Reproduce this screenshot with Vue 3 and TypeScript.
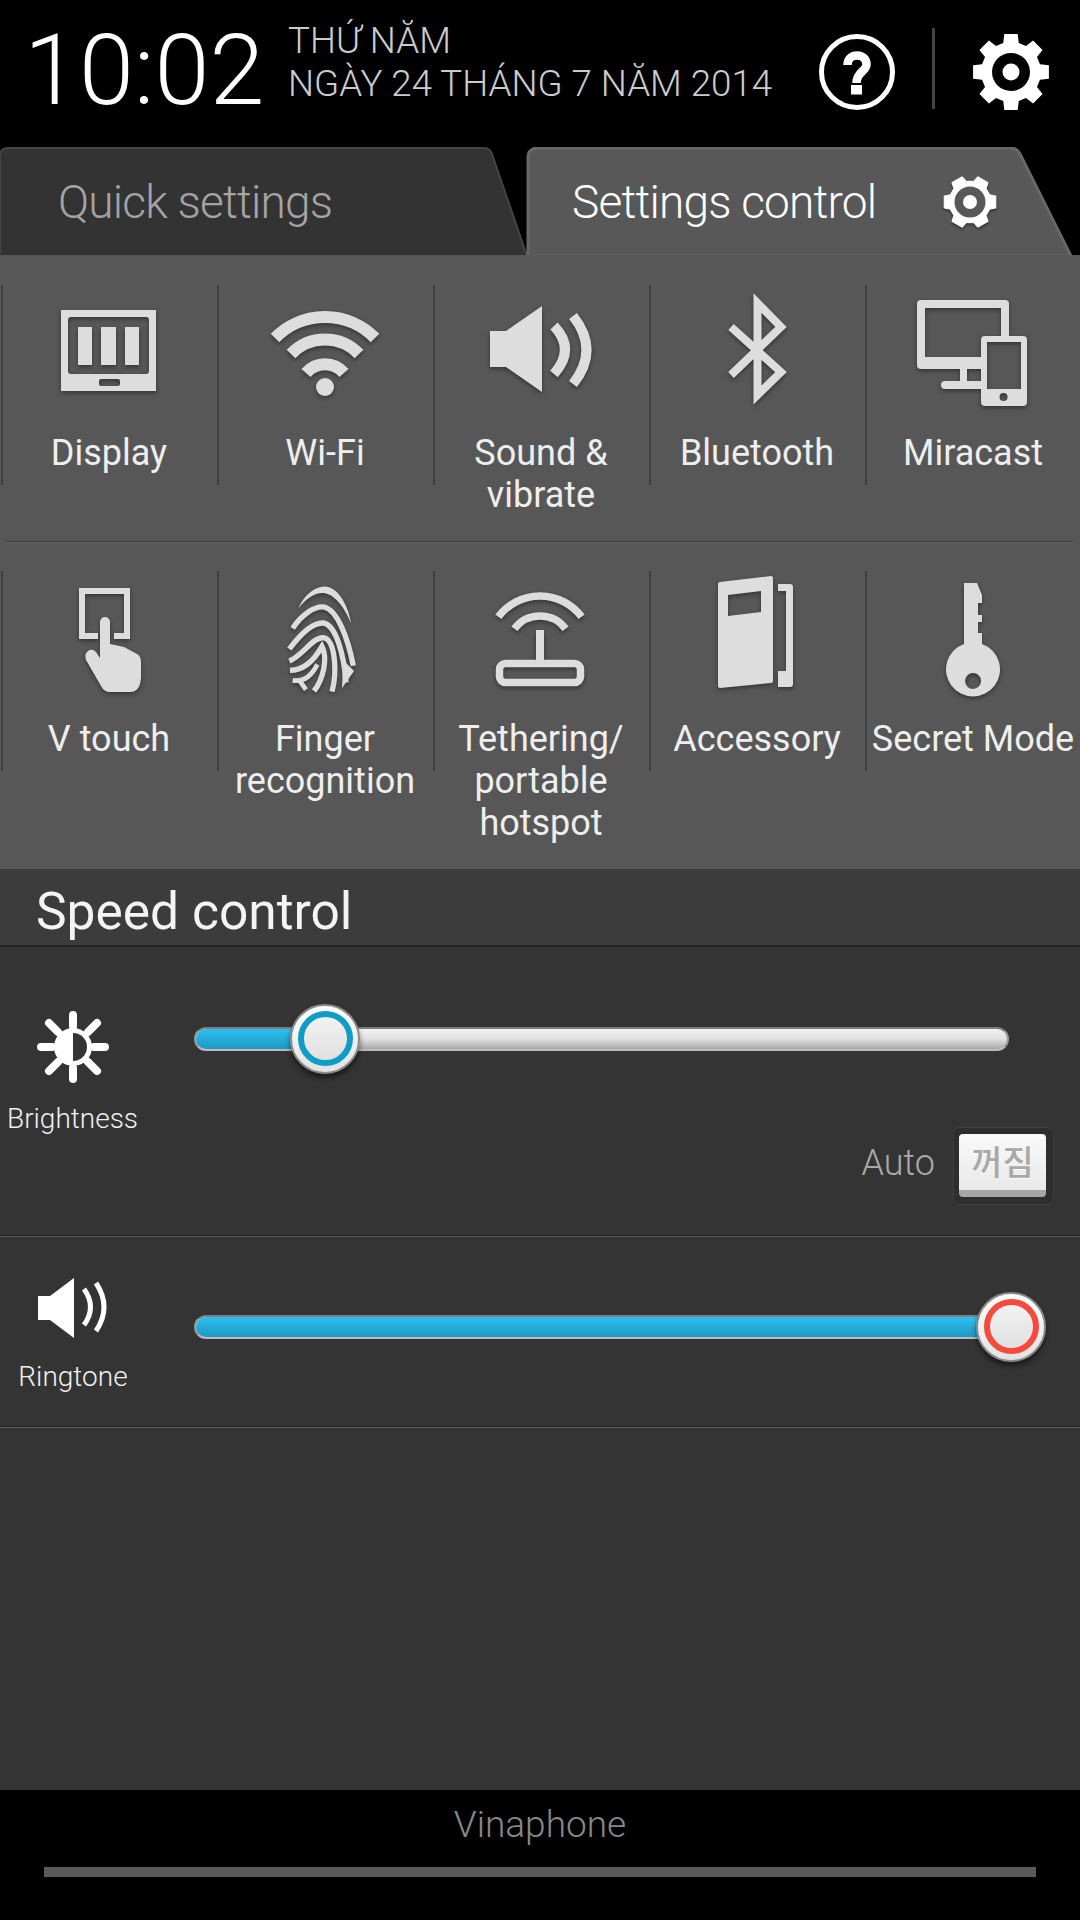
<script setup lang="ts">
function gear(cx: number, cy: number, n: number, rTip: number, rBody: number, tipHalf: number, baseHalf: number, start = 0): string {
  const pts: string[] = []
  const p = (deg: number, r: number) => {
    const a = (deg * Math.PI) / 180
    return `${(cx + r * Math.cos(a)).toFixed(2)} ${(cy + r * Math.sin(a)).toFixed(2)}`
  }
  for (let i = 0; i < n; i++) {
    const a = start + (360 / n) * i
    pts.push(p(a - baseHalf, rBody), p(a - tipHalf, rTip), p(a + tipHalf, rTip), p(a + baseHalf, rBody))
  }
  return 'M' + pts.join('L') + 'Z'
}
const bigGear = gear(1011, 72, 8, 38.5, 30, 10, 15)
const smallGear = gear(970, 202, 6, 26.5, 21, 13, 20)

const trackInnerLeft = 196
const trackInnerWidth = 811
const brightnessPct = ((325 - trackInnerLeft) / trackInnerWidth) * 100
const ringtonePct = ((1011 - trackInnerLeft) / trackInnerWidth) * 100
</script>

<template>
  <div class="screen">
    <header class="status">
      <div class="time">10:02</div>
      <div class="date">
        <div>THỨ NĂM</div>
        <div>NGÀY 24 THÁNG 7 NĂM 2014</div>
      </div>
      <svg class="help" viewBox="817 32 80 80">
        <circle cx="857" cy="72" r="35.5" fill="none" stroke="#fff" stroke-width="5" />
        <path d="M847.5 65C847.5 58.500 852 55.500 857 55.500C863 55.500 866.500 59.500 866.500 64.500C866.500 71.500 856.500 71.500 856.500 83" fill="none" stroke="#fff" stroke-width="8.500" />
        <rect x="851" y="85" width="11" height="9.500" fill="#fff" />
      </svg>
      <div class="vline"></div>
      <svg class="cog" viewBox="971 32 80 80">
        <path :d="bigGear" fill="#fff" />
        <circle cx="1011" cy="72" r="19" fill="#000" />
        <circle cx="1011" cy="72" r="8.500" fill="#fff" />
      </svg>
    </header>

    <div class="tabs">
      <svg class="tab-shapes" viewBox="0 147 1080 108">
        <path d="M0 256V156Q0 148 8 148H484Q490 148 492 154L527 256Z" fill="#333" stroke="#444" stroke-width="2" />
        <path d="M528 256V158Q528 148 538 148H1010Q1017 148 1020 154L1071 256Z" fill="#585858" stroke="#686868" stroke-width="3" />
      </svg>
      <div class="tab tab-off">Quick settings</div>
      <div class="tab tab-on">
        <span>Settings control</span>
        <svg class="tab-gear" viewBox="940 172 60 60">
          <path :d="smallGear" fill="#fff" stroke="#fff" stroke-width="1" stroke-linejoin="round" />
          <circle cx="970" cy="202" r="15.500" fill="#585858" />
          <circle cx="970" cy="202" r="7" fill="#fff" />
        </svg>
      </div>
    </div>

    <section class="panel">
      <div class="row row-a">
        <div class="cell">
          <svg class="ico" viewBox="1 285 216 147">
            <path fill-rule="evenodd" d="M61 310H156V391H61ZM71 317Q68 317 68 320V371Q68 374 71 374H146Q149 374 149 371V320Q149 317 146 317ZM101 379Q99 379 99 381V384Q99 386 101 386H118Q120 386 120 384V381Q120 379 118 379Z" fill="#ddd" />
            <path d="M78 327H92V365H78ZM101 327H116V365H101ZM125 327H139V365H125Z" fill="#ddd" />
          </svg>
          <div class="label">Display</div>
        </div>
        <div class="cell">
          <svg class="ico" viewBox="217 285 216 147">
            <g fill="none" stroke="#ddd" stroke-width="12">
              <path d="M275 338A70 70 0 0 1 375 338" />
              <path d="M291 354A47 47 0 0 1 359 354" />
              <path d="M306 373A25 25 0 0 1 344 373" />
            </g>
            <circle cx="325" cy="387" r="9" fill="#ddd" />
          </svg>
          <div class="label">Wi-Fi</div>
        </div>
        <div class="cell">
          <svg class="ico" viewBox="433 285 216 147">
            <path d="M490 331H506L542 306V392L506 367H490Z" fill="#ddd" />
            <g fill="none" stroke="#ddd" stroke-width="10">
              <path d="M554 326Q576 349 554 374" />
              <path d="M573 316Q600 350 573 384" />
            </g>
          </svg>
          <div class="label">Sound &amp;<br />vibrate</div>
        </div>
        <div class="cell">
          <svg class="ico" viewBox="649 285 216 147">
            <path d="M731 327L781 372L757.500 395V303L781 327L731 375" fill="none" stroke="#ddd" stroke-width="8" stroke-miterlimit="6" />
          </svg>
          <div class="label">Bluetooth</div>
        </div>
        <div class="cell">
          <svg class="ico" viewBox="865 285 216 147">
            <path fill-rule="evenodd" d="M921 300H1005Q1009 300 1009 304V336H1001V308H925V357H981V369H967V381H981V389H945Q941 389 941 385Q941 381 945 381H960V369H921Q917 369 917 365V304Q917 300 921 300Z" fill="#ddd" />
            <path fill-rule="evenodd" d="M985 336H1023Q1027 336 1027 340V402Q1027 406 1023 406H985Q981 406 981 402V340Q981 336 985 336ZM987 342V389H1021V342ZM1003.500 393A4 4 0 1 0 1003.600 401A4 4 0 1 0 1003.500 393Z" fill="#ddd" />
          </svg>
          <div class="label">Miracast</div>
        </div>
      </div>

      <div class="hr"></div>

      <div class="row row-b">
        <div class="cell">
          <svg class="ico" viewBox="1 571 216 147">
            <path d="M98 636H82V591H127V636H114" fill="none" stroke="#ddd" stroke-width="6" />
            <path d="M100 622A5 5 0 0 1 110 622V644L124 647L137 654Q141 656 141 662V678Q140 692 130 692H110Q104 692 101 686L86 660Q84 654 88 651Q92 648 96 652L100 658Z" fill="#ddd" />
          </svg>
          <div class="label">V touch</div>
        </div>
        <div class="cell">
          <svg class="ico" viewBox="217 571 216 147">
            <g transform="translate(270 575) scale(.33333)" fill="none" stroke="#ddd" stroke-width="16">
              <path d="M85 100C105 55 140 33 170 35C205 40 235 90 243 145C225 100 195 60 165 55C135 50 105 75 85 100Z" fill="#ddd" stroke="none" />
              <path d="M68 160C95 118 135 92 162 96C202 104 234 190 250 272" />
              <path d="M58 222C88 182 128 142 160 144C198 150 222 240 228 322" />
              <path d="M58 258C98 242 128 186 160 188C196 194 202 290 186 350" />
              <path d="M60 286C110 286 138 246 156 214C174 250 160 312 132 348" />
              <path d="M68 316C104 322 128 296 142 268" stroke-width="14" />
              <path d="M88 316L108 344" stroke-width="14" />
              <path d="M220 256L252 288L216 340Z" fill="#ddd" stroke="none" />
            </g>
          </svg>
          <div class="label">Finger<br />recognition</div>
        </div>
        <div class="cell">
          <svg class="ico" viewBox="433 571 216 147">
            <g fill="none" stroke="#ddd" stroke-width="7.500">
              <path d="M498.400 616.800A52 52 0 0 1 581.600 616.800" />
              <path d="M514.400 628.800A32 32 0 0 1 565.600 628.800" />
              <rect x="499.500" y="663.500" width="81" height="19" rx="6" />
            </g>
            <rect x="536" y="630" width="8" height="32" fill="#ddd" />
          </svg>
          <div class="label">Tethering/<br />portable<br />hotspot</div>
        </div>
        <div class="cell">
          <svg class="ico" viewBox="649 571 216 147">
            <path fill-rule="evenodd" d="M720 582L771 576Q773 576 773 578V681Q773 683 771 683L720 688Q718 688 718 686V584Q718 582 720 582ZM728 595V616L761 612V591Z" fill="#ddd" />
            <path d="M778 584H790Q793 584 793 587V684Q793 687 790 687H778V671H786V591H778Z" fill="#ddd" />
          </svg>
          <div class="label">Accessory</div>
        </div>
        <div class="cell">
          <svg class="ico" viewBox="865 571 216 147">
            <path fill-rule="evenodd" d="M964 583H977L982 595V603H978V615H982V622H978V633H982V644A27 27 0 1 1 964 644ZM973 673A8 8 0 1 0 973.100 689A8 8 0 1 0 973 673Z" fill="#ddd" />
          </svg>
          <div class="label">Secret Mode</div>
        </div>
      </div>
    </section>

    <div class="speed-head">Speed control</div>

    <section class="speed">
      <div class="srow srow-a">
        <div class="side">
          <svg class="side-ico" viewBox="32 1007 80 80">
            <g stroke="#fff" stroke-width="8" stroke-linecap="round">
              <path d="M72 1015V1026M72 1068V1079M40 1047H51M93 1047H104M48 1023L57 1032M87 1062L96 1071M48 1071L57 1062M87 1032L96 1023" />
            </g>
            <circle cx="72" cy="1047" r="19" fill="#fff" />
            <path d="M72 1033A14 14 0 0 1 72 1061Z" fill="#343434" />
          </svg>
          <div class="side-label">Brightness</div>
        </div>
        <div class="slider-col">
          <div class="track">
            <div class="fill" :style="{ width: brightnessPct + '%' }"></div>
            <div class="thumb blue" :style="{ left: brightnessPct + '%' }"><i></i></div>
          </div>
          <div class="auto">
            <span class="auto-label">Auto</span>
            <div class="toggle"><div class="toggle-btn">꺼짐</div></div>
          </div>
        </div>
      </div>
      <div class="srow srow-b">
        <div class="side side-ring">
          <svg class="side-ico ring" viewBox="33 1273 80 70">
            <path d="M38 1296H50L74 1278V1338L50 1320H38Z" fill="#fff" />
            <g fill="none" stroke="#fff" stroke-width="5">
              <path d="M84 1289Q97 1307 84 1325" />
              <path d="M96 1283Q112 1307 96 1331" />
            </g>
          </svg>
          <div class="side-label">Ringtone</div>
        </div>
        <div class="slider-col">
          <div class="track">
            <div class="fill full"></div>
            <div class="thumb red" :style="{ left: ringtonePct + '%' }"><i></i></div>
          </div>
        </div>
      </div>
    </section>

    <footer class="foot">
      <div class="carrier">Vinaphone</div>
      <div class="foot-bar"></div>
    </footer>
  </div>
</template>

<style scoped>
.screen {
  width: 1080px;
  height: 1920px;
  background: #000;
  overflow: hidden;
  display: flex;
  flex-direction: column;
  font-family: Roboto, "Noto Sans CJK KR", sans-serif;
  color: #f2f2f2;
}
.status {
  height: 147px;
  display: flex;
  align-items: flex-start;
  padding-left: 24px;
  box-sizing: border-box;
  flex: none;
}
.time {
  font-size: 99px;
  line-height: 110px;
  font-weight: 300;
  color: #fff;
  margin-top: 15px;
  width: 264px;
}
.date {
  font-size: 36.7px;
  line-height: 43px;
  font-weight: 300;
  color: #ccc;
  margin-top: 19px;
}
.help {
  width: 80px;
  height: 80px;
  margin-top: 32px;
  margin-left: auto;
}
.vline {
  width: 3px;
  height: 81px;
  margin: 28px 0 0 35px;
  background: #444;
}
.cog {
  width: 80px;
  height: 80px;
  margin: 32px 29px 0 36px;
}
.tabs {
  height: 108px;
  flex: none;
  position: relative;
  display: flex;
}
.tab-shapes {
  position: absolute;
  left: 0;
  top: 0;
  width: 1080px;
  height: 108px;
}
.tab {
  position: relative;
  font-size: 46px;
  line-height: 52px;
  font-weight: 300;
  letter-spacing: -0.8px;
  display: flex;
  align-items: center;
  height: 108px;
  padding-top: 2px;
  box-sizing: border-box;
}
.tab-off {
  width: 527px;
  padding-left: 58px;
  color: #a4a4a4;
}
.tab-on {
  width: 553px;
  padding-left: 45px;
  color: #fff;
}
.tab-gear {
  width: 60px;
  height: 60px;
  position: absolute;
  left: 413px;
  top: 25px;
  filter: drop-shadow(0 2px 1px rgba(0, 0, 0, 0.4));
}
.panel {
  flex: none;
  height: 614px;
  box-sizing: border-box;
  background: #575757;
  padding-top: 30px;
}
.row {
  display: grid;
  grid-template-columns: repeat(5, 216px);
  margin-left: 1px;
}
.row-a {
  height: 231px;
}
.row-b {
  height: 272px;
  margin-top: 28px;
}
.hr {
  height: 1px;
  margin: 25px 7px 0 6px;
  background: #3c3c3c;
  border-bottom: 1px solid #666;
}
.cell {
  position: relative;
  text-align: center;
}
.cell::before {
  content: "";
  position: absolute;
  left: 0;
  top: 0;
  width: 2px;
  height: 200px;
  background: #404040;
}
.ico {
  display: block;
  width: 216px;
  height: 147px;
  filter: drop-shadow(0 2px 2px rgba(0, 0, 0, 0.4));
}
.label {
  font-size: 36px;
  line-height: 42px;
  color: #eee;
}
.speed-head {
  flex: none;
  height: 78px;
  box-sizing: border-box;
  background: #3c3c3c;
  border-bottom: 2px solid #262626;
  padding: 10px 0 0 36px;
  font-size: 51.5px;
  line-height: 66px;
  color: #f4f4f4;
}
.speed {
  flex: 1;
  background: #343434;
}
.srow {
  display: flex;
  box-sizing: border-box;
  border-bottom: 1px solid #222;
  box-shadow: 0 1px 0 #5a5a5a;
}
.srow-a {
  height: 289px;
  padding-top: 60px;
}
.srow-b {
  height: 190px;
  margin-top: 1px;
  padding-top: 36px;
}
.side {
  width: 145px;
  flex: none;
  box-sizing: border-box;
  text-align: center;
}
.side-ring {
  padding-left: 1px;
}
.side-ico {
  display: block;
  width: 80px;
  height: 80px;
  margin: 0 auto;
}
.side-ico.ring {
  height: 70px;
}
.side-label {
  font-size: 28px;
  line-height: 30px;
  color: #f0f0f0;
  font-weight: 300;
  margin-top: 17px;
}
.srow-b .side-label {
  margin-top: 19px;
}
.slider-col {
  padding-left: 49px;
  flex: 1;
  padding-right: 26px;
}
.srow-a .slider-col {
  margin-top: 20px;
}
.srow-b .slider-col {
  margin-top: 42px;
}
.track {
  position: relative;
  width: 815px;
  height: 24px;
  box-sizing: border-box;
  border-radius: 12px;
  border: 2px solid #999;
  border-top-color: #7e7e7e;
  border-bottom-color: #bbb;
  background: linear-gradient(#f4f4f4, #dcdcdc 55%, #a8a8a8);
}
.fill {
  position: absolute;
  left: 0;
  top: 0;
  bottom: 0;
  border-radius: 10px 0 0 10px;
  background: linear-gradient(#2ac0f0, #1f98c4);
}
.fill.full {
  width: 100%;
  border-radius: 10px;
}
.thumb {
  position: absolute;
  top: 9.5px;
  width: 70px;
  height: 70px;
  margin: -35px 0 0 -35px;
  box-sizing: border-box;
  border-radius: 50%;
  border: 2px solid #8a8a8a;
  background: linear-gradient(#fff, #e2e2e2);
  box-shadow: 0 4px 5px rgba(0, 0, 0, 0.5);
  display: flex;
  align-items: center;
  justify-content: center;
}
.thumb i {
  display: block;
  width: 55px;
  height: 55px;
  box-sizing: border-box;
  border-radius: 50%;
  border: 6px solid #0f9cc6;
  background: linear-gradient(#f2f2f2, #e0e0e0);
}
.thumb.red i {
  border-color: #f44b3d;
}
.auto {
  display: flex;
  justify-content: flex-end;
  align-items: center;
  margin-top: 76px;
}
.auto-label {
  font-size: 36px;
  color: #aaa;
  font-weight: 300;
  margin: 0 18px 7px 0;
}
.toggle {
  width: 101px;
  height: 78px;
  box-sizing: border-box;
  border: 1px solid #3e3e3e;
  border-radius: 7px;
  background: #2e2e2e;
  padding: 6px 5px;
}
.toggle-btn {
  width: 87px;
  height: 63px;
  box-sizing: border-box;
  border-radius: 4px;
  border-bottom: 7px solid #a6a6a6;
  background: linear-gradient(#fafafa, #e8e8e8);
  color: #a8a8a8;
  font-family: "Noto Sans CJK KR", sans-serif;
  font-weight: 500;
  font-size: 34px;
  line-height: 54px;
  text-align: center;
  text-shadow: 0 1px 0 #fff;
}
.foot {
  flex: none;
  height: 130px;
  background: #000;
  box-sizing: border-box;
}
.carrier {
  font-size: 37px;
  line-height: 40px;
  padding-top: 15px;
  text-align: center;
  color: #888;
  font-weight: 300;
}
.foot-bar {
  height: 10px;
  margin: 22px 44px 0;
  background: #5a5a5a;
}
</style>
